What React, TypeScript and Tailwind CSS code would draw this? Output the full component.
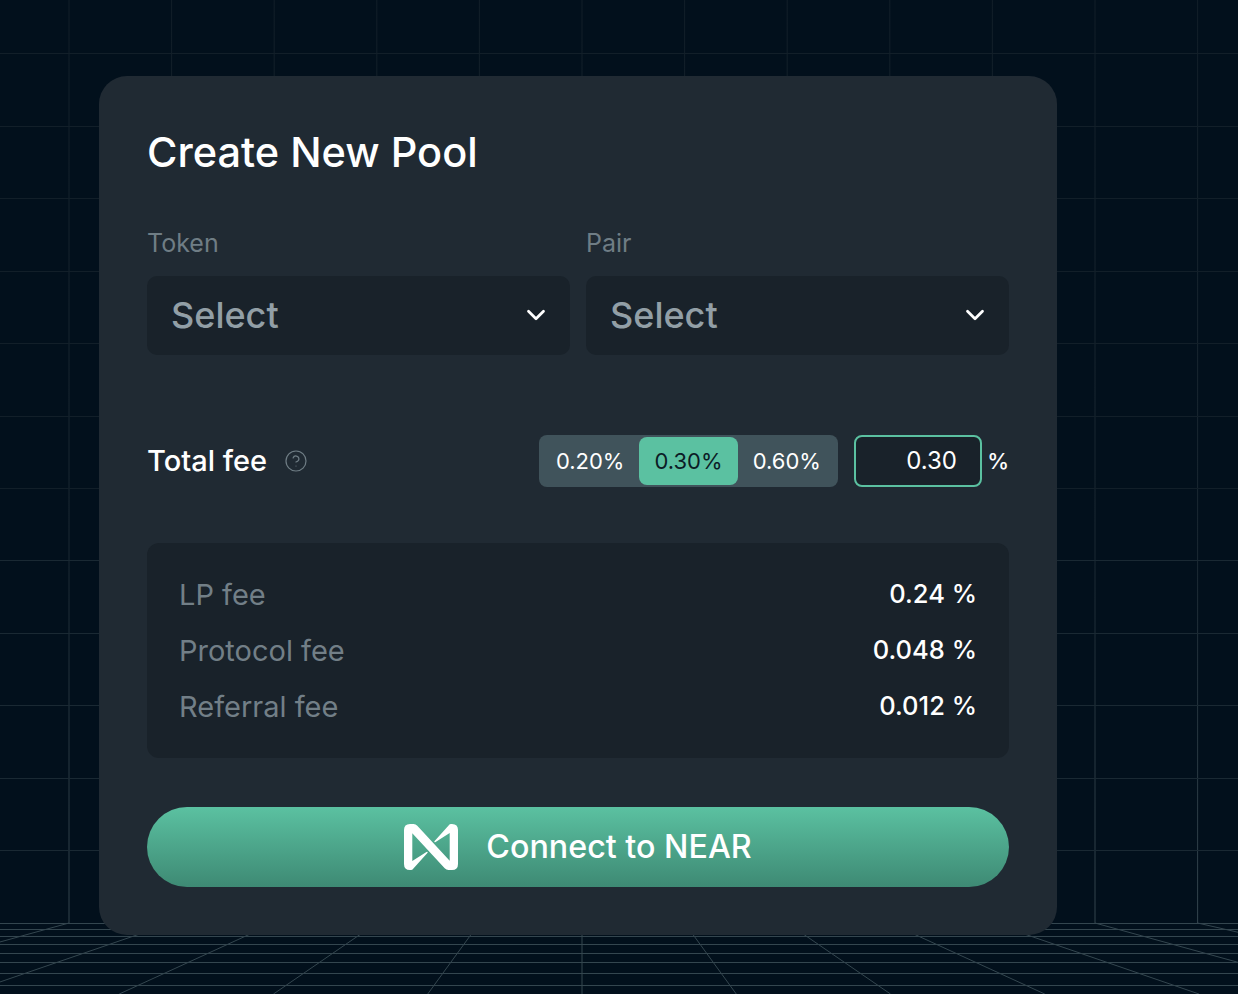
import { ChevronDown, CircleHelp } from 'lucide-react'

const gridX = Array.from({ length: 25 }, (_, i) => 582 + (i - 12) * 102.6)
const gridY = [53, 126, 198, 271, 343, 416, 488, 560, 633, 705, 778, 850]
const floorY = [923, 929, 936, 944, 953, 962, 973, 985]

function Backdrop() {
  return (
    <svg className="absolute inset-0" width="1238" height="994" viewBox="0 0 1238 994">
      <defs>
        <linearGradient id="wall" gradientUnits="userSpaceOnUse" x1="0" y1="0" x2="0" y2="923">
          <stop offset="0" stopColor="#111e28" />
          <stop offset="0.6" stopColor="#1a2832" />
          <stop offset="1" stopColor="#33444d" />
        </linearGradient>
      </defs>
      {gridX.map((x) => (
        <line key={x} x1={x} y1="0" x2={x} y2="923" stroke="url(#wall)" strokeWidth="1" />
      ))}
      {gridY.map((y) => (
        <line key={y} x1="0" y1={y + 0.5} x2="1238" y2={y + 0.5} stroke={y > 500 ? '#1a2933' : '#121f29'} strokeWidth="1" />
      ))}
      {floorY.map((y) => (
        <line key={y} x1="0" y1={y + 0.5} x2="1238" y2={y + 0.5} stroke="#34464f" strokeWidth="1" />
      ))}
      {gridX.map((x) => (
        <line key={x} x1={x} y1="923" x2={582 + (x - 582) * 1.5035} y2="994" stroke="#34464f" strokeWidth="1" />
      ))}
    </svg>
  )
}

function NearLogo() {
  return (
    <svg width="54" height="46" viewBox="0 0 54 46" fill="#fff">
      <path d="M48 0H47Q45.6 0 44.8 1.3L30.4 17.2Q30 18.6 31.6 18L45.7 9V36.7L13.3 1.7Q11.8 0 9.5 0H6Q0 0 0 6V40Q0 46 6 46H7Q8.4 46 9.2 44.7L23.6 28.8Q24 27.4 22.4 28L8.3 37V9.3L40.7 44.3Q42.2 46 44.5 46H48Q54 46 54 40V6Q54 0 48 0Z" />
    </svg>
  )
}

function SelectBox({ label }: { label: string }) {
  return (
    <div className="flex-1">
      <div className="text-[25px] leading-[34px] text-[#6f7d85]">{label}</div>
      <div className="mt-[16px] h-[79px] rounded-[10px] bg-[#19222a] pl-[24px] pr-[19px] pb-[2px] flex items-center justify-between">
        <span className="text-[36px] font-medium text-[#929fa6]">Select</span>
        <ChevronDown size={30} strokeWidth={2.2} className="text-white" />
      </div>
    </div>
  )
}

function FeeRow({ label, value }: { label: string; value: string }) {
  return (
    <div className="h-[56px] flex items-center justify-between">
      <span className="text-[29px] text-[#727f87]">{label}</span>
      <span className="pb-[2px] text-[25.5px] font-medium text-white">{value}</span>
    </div>
  )
}

export default function App() {
  return (
    <div className="relative h-[994px] overflow-hidden bg-[#02101c] font-['Inter',sans-serif]">
      <Backdrop />
      <div className="relative pt-[76px] pl-[99px]">
        <div className="w-[958px] h-[859px] rounded-[28px] bg-[#202a33] px-[48px] pt-[48px]">
          <h1 className="text-[41.5px] leading-[56px] font-medium text-white">Create New Pool</h1>

          <div className="mt-[46px] flex gap-[16px]">
            <SelectBox label="Token" />
            <SelectBox label="Pair" />
          </div>

          <div className="mt-[80px] h-[52px] flex items-center">
            <span className="text-[29px] font-medium text-white">Total fee</span>
            <CircleHelp size={24} strokeWidth={1.2} className="ml-[17px] text-[#6f7d85]" />
            <div className="ml-auto h-[52px] w-[299px] rounded-[8px] bg-[#40535b] p-[2px] flex text-[22px] text-white">
              <div className="flex-1 flex items-center justify-center">0.20%</div>
              <div className="flex-1 flex items-center justify-center rounded-[8px] bg-[#5bc1a1] text-[#0c1c26]">0.30%</div>
              <div className="flex-1 flex items-center justify-center">0.60%</div>
            </div>
            <div className="ml-[16px] h-[52px] w-[128px] rounded-[8px] border-2 border-[#5bc1a1] bg-[#19222a] pr-[23px] flex items-center justify-end text-[24px] text-white">
              0.30
            </div>
            <span className="w-[27px] text-right text-[22px] font-medium text-white">%</span>
          </div>

          <div className="mt-[56px] h-[215px] rounded-[12px] bg-[#19222a] px-[32px] py-[24px]">
            <FeeRow label="LP fee" value="0.24 %" />
            <FeeRow label="Protocol fee" value="0.048 %" />
            <FeeRow label="Referral fee" value="0.012 %" />
          </div>

          <button className="mt-[49px] w-full h-[80px] rounded-full bg-gradient-to-b from-[#5bc1a1] to-[#3e8a74] flex items-center justify-center gap-[28px] text-[32.25px] font-medium text-white">
            <NearLogo />
            Connect to NEAR
          </button>
        </div>
      </div>
    </div>
  )
}
